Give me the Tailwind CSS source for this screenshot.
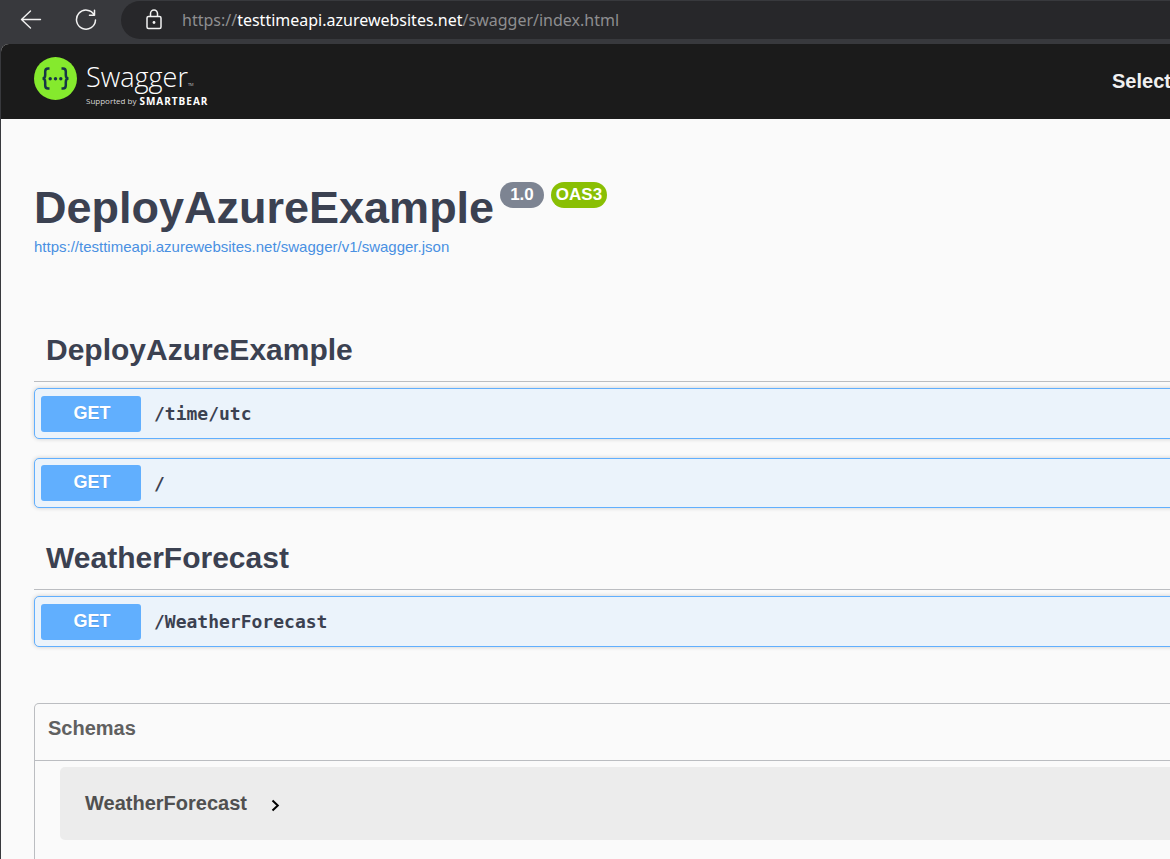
<!DOCTYPE html>
<html lang="en">
<head>
<meta charset="utf-8">
<meta name="viewport" content="width=device-width, initial-scale=1">
<title>Swagger UI</title>
<script src="https://cdn.jsdelivr.net/npm/@tailwindcss/browser@4"></script>
</head>
<body class="flex min-h-screen flex-col overflow-hidden bg-[#38393d] font-['Liberation_Sans',Arial,sans-serif] text-[#3b4151]">
  <!-- Browser toolbar -->
  <nav class="flex h-11 shrink-0 items-start" aria-label="Browser">
    <button class="ml-5 mt-2 h-6 w-6" aria-label="Back">
      <svg class="h-6 w-6" viewBox="0 0 24 24" fill="none" stroke="#f2f2f2" stroke-width="1.4" stroke-linecap="round" stroke-linejoin="round"><path d="M20.500 11.500H1.500M10.500 3L1.500 11.500L10.500 20"/></svg>
    </button>
    <button class="ml-[31px] mt-2 h-6 w-6" aria-label="Refresh">
      <svg class="h-6 w-6" viewBox="0 0 24 24" fill="none" stroke="#f2f2f2" stroke-width="1.5" stroke-linecap="round" stroke-linejoin="round"><path d="M19.300 7A9.500 9.500 0 1 0 20.500 12M19.500 2.300V7.300H14.500"/></svg>
    </button>
    <div class="ml-[22px] mt-px flex h-[38px] flex-1 items-center rounded-l-full bg-[#27272a] pl-6">
      <svg class="h-6 w-[18px] shrink-0" viewBox="0 0 18 24" fill="none" stroke="#f2f2f2" stroke-width="1.5"><rect x="2" y="8.500" width="14" height="12" rx="1.500"/><path d="M5.500 8.500V5.500a3.500 3.500 0 0 1 7 0V8.500"/><circle cx="9" cy="14.500" r="1.400" fill="#f2f2f2" stroke="none"/></svg>
      <a href="#" class="ml-[19px] whitespace-nowrap font-['Noto_Sans','Open_Sans',sans-serif] text-[16px] leading-6 text-[#8e8e90]">https://<span class="text-white">testtimeapi.azurewebsites.net</span>/swagger/index.html</a>
    </div>
  </nav>

  <div class="ml-px flex-1 rounded-tl-lg bg-[#fafafa]">
    <header class="flex h-[75px] items-start rounded-tl-lg bg-[#1b1b1b] pl-[33px]">
      <a href="#" class="flex" aria-label="Swagger, supported by SmartBear">
        <svg class="mt-[13px] h-[43px] w-[43px]" viewBox="0 0 43 43"><circle cx="21.500" cy="21.500" r="21.500" fill="#85ea2d"/><g fill="none" stroke="#173647" stroke-width="2.500"><path d="M15.500 11.500h-1.500q-2.800 0-2.800 3v3.500q0 3.500-2.700 3.500q2.700 0 2.700 3.500v3.500q0 3 2.800 3h1.500"/><path d="M27.500 11.500h1.500q2.800 0 2.800 3v3.500q0 3.500 2.700 3.500q-2.700 0-2.700 3.500v3.500q0 3-2.800 3h-1.500"/></g><g fill="#173647"><circle cx="16.200" cy="21.700" r="1.700"/><circle cx="21.500" cy="21.700" r="1.700"/><circle cx="26.800" cy="21.700" r="1.700"/></g></svg>
        <span class="ml-[9px] mt-[15px] flex flex-col whitespace-nowrap font-['Open_Sans',sans-serif] text-white">
          <span class="flex items-end text-[27px] font-light leading-9">Swagger<span class="pb-1 text-[4px] leading-3">TM</span></span>
          <span class="flex items-center gap-[3px] text-[8px] leading-3"><span class="text-[#d8d8d8]">Supported by</span><span class="text-[10px] font-bold tracking-widest">SMARTBEAR</span></span>
        </span>
      </a>
      <div class="ml-auto mt-[25px] w-[58px] overflow-hidden whitespace-nowrap text-[20px] font-bold leading-6 text-[#f0f0f0]">Select</div>
    </header>

    <main class="pl-[33px] pt-[63px]">
      <section>
        <div class="flex items-start">
          <h1 class="mt-px text-[45px] font-bold leading-[50px]">DeployAzureExample</h1>
          <span class="ml-[6px] flex h-[26px] items-center rounded-full bg-[#7d8492] px-[10px] pb-px text-[17px] font-bold text-white">1.0</span>
          <span class="ml-[7px] flex h-[26px] items-center rounded-full bg-[#89bf04] px-[5px] pb-px text-[17px] font-bold text-white">OAS3</span>
        </div>
        <a href="#" class="mt-1 block text-[15px] leading-5 text-[#4990e2]">https://testtimeapi.azurewebsites.net/swagger/v1/swagger.json</a>
      </section>

      <section class="mt-[67px]">
        <h2 class="h-[58px] border-b border-[#bbbdc1] pl-3 pt-1 text-[30px] font-bold leading-[44px]">DeployAzureExample</h2>
        <div class="-mr-2 mt-[6px] flex flex-col gap-[19px]">
          <button class="flex h-[51px] items-center rounded-[5px] border border-[#61affe] bg-[#ebf3fb] pl-[6px] text-left shadow-[0_0_4px_rgba(0,0,0,0.19)]">
            <span class="flex h-9 w-[100px] items-center justify-center rounded-[3px] bg-[#61affe] pb-px pl-[2px] text-[18px] font-bold text-white [text-shadow:0_1px_0_rgba(0,0,0,0.1)]">GET</span>
            <span class="ml-[13px] font-['DejaVu_Sans_Mono',monospace] text-[18px] font-bold">/time/utc</span>
          </button>
          <button class="flex h-[50px] items-center rounded-[5px] border border-[#61affe] bg-[#ebf3fb] pl-[6px] text-left shadow-[0_0_4px_rgba(0,0,0,0.19)]">
            <span class="flex h-9 w-[100px] items-center justify-center rounded-[3px] bg-[#61affe] pb-px pl-[2px] text-[18px] font-bold text-white [text-shadow:0_1px_0_rgba(0,0,0,0.1)]">GET</span>
            <span class="ml-[13px] font-['DejaVu_Sans_Mono',monospace] text-[18px] font-bold">/</span>
          </button>
        </div>
      </section>

      <section class="mt-6">
        <h2 class="h-[58px] border-b border-[#bbbdc1] pl-3 pt-1 text-[30px] font-bold leading-[44px]">WeatherForecast</h2>
        <div class="-mr-2 mt-[6px] flex flex-col">
          <button class="flex h-[51px] items-center rounded-[5px] border border-[#61affe] bg-[#ebf3fb] pl-[6px] text-left shadow-[0_0_4px_rgba(0,0,0,0.19)]">
            <span class="flex h-9 w-[100px] items-center justify-center rounded-[3px] bg-[#61affe] pb-px pl-[2px] text-[18px] font-bold text-white [text-shadow:0_1px_0_rgba(0,0,0,0.1)]">GET</span>
            <span class="ml-[13px] font-['DejaVu_Sans_Mono',monospace] text-[18px] font-bold">/WeatherForecast</span>
          </button>
        </div>
      </section>

      <section class="-mr-2 mt-14 h-[156px] overflow-hidden rounded-t-[5px] border border-b-0 border-[#bbbdc1]">
        <h3 class="h-[57px] border-b border-[#bbbdc1] pl-[13px] pt-3 text-[20px] font-bold leading-6 text-[#606060]">Schemas</h3>
        <button class="ml-[25px] mt-[6px] flex h-[73px] w-full items-center rounded-[5px] bg-[#ececec] pl-[25px] text-left text-[20px] font-bold text-[#505050]">
          <span class="pb-[2px]">WeatherForecast</span>
          <svg class="ml-6 mt-1 h-[13px] w-[9px]" viewBox="0 0 9 13" fill="none" stroke="#000" stroke-width="2"><path d="M1.500 1.500L6.800 6.500L1.500 11.500"/></svg>
        </button>
      </section>
    </main>
  </div>
</body>
</html>
